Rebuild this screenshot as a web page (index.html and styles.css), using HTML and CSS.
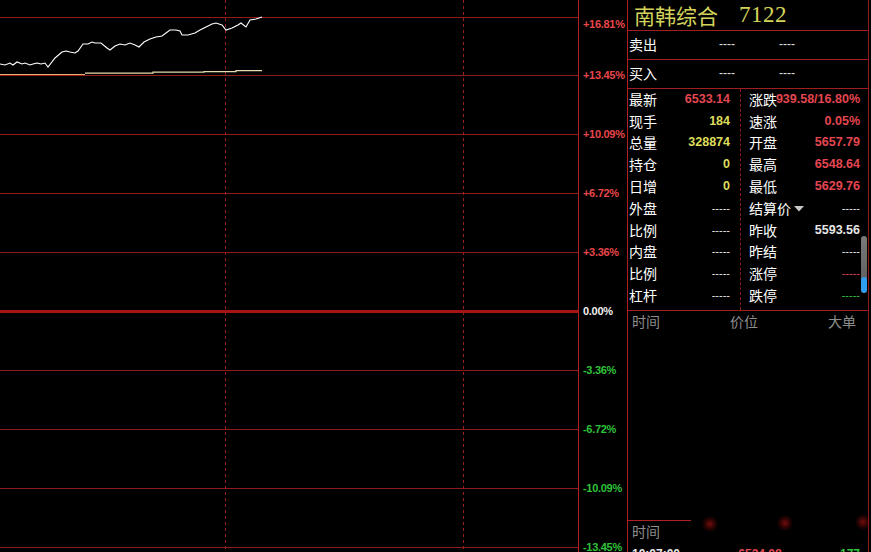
FILE: index.html
```html
<!DOCTYPE html>
<html lang="zh">
<head>
<meta charset="utf-8">
<title>南韩综合 7122</title>
<link rel="stylesheet" href="styles.css">
</head>
<body>
<div class="chart">
  <svg class="chart-svg" width="579" height="552" viewBox="0 0 579 552">
    <g stroke="#8e1a1a" stroke-width="1">
      <line x1="0" y1="17.5" x2="578" y2="17.5"/>
      <line x1="0" y1="75.5" x2="578" y2="75.5"/>
      <line x1="0" y1="134.5" x2="578" y2="134.5"/>
      <line x1="0" y1="193.5" x2="578" y2="193.5"/>
      <line x1="0" y1="252.5" x2="578" y2="252.5"/>
      <line x1="0" y1="370.5" x2="578" y2="370.5"/>
      <line x1="0" y1="429.5" x2="578" y2="429.5"/>
      <line x1="0" y1="488.5" x2="578" y2="488.5"/>
      <line x1="0" y1="547.5" x2="578" y2="547.5"/>
    </g>
    <line x1="0" y1="311.5" x2="578" y2="311.5" stroke="#a81414" stroke-width="3"/>
    <g stroke="#9a2020" stroke-width="1" stroke-dasharray="3,3">
      <line x1="225.5" y1="0" x2="225.5" y2="552"/>
      <line x1="463.5" y1="0" x2="463.5" y2="552"/>
    </g>
    <line x1="578.5" y1="0" x2="578.5" y2="552" stroke="#b02020" stroke-width="1"/>
    <polyline fill="none" stroke="#e8b070" stroke-width="1.2" points="0,74.5 85,74.5"/>
    <polyline fill="none" stroke="#e8dcb0" stroke-width="1.2" points="85,73.2 153,73.2 153,72.2 204,72.2 204,71.6 236,71.6 236,70.6 262,70.6"/>
    <polyline fill="none" stroke="#ffffff" stroke-width="1.1" points="0,64 5,65 10,63 13,65 17,62 22,64 25,63 30,65 33,64 37,63 41,64 45,63 48,67 55,58 62,52 66,51 70,52 75,53 78,51 83,44 88,44 92,42 95,43 101,43 107,48 110,50 115,46 120,44 125,45 130,43 135,45 139,47 144,42 150,39 156,37 162,36 166,33 170,30 176,30 180,31 182,35 188,35 195,33 200,30 206,27 212,24 216,23 222,25 226,30 232,28 238,25 241,23 246,27 250,20 256,19 262,17"/>
  </svg>
</div>
<div class="axis">
  <div class="tick tick-first up">+16.81%</div>
  <div class="tick up">+13.45%</div>
  <div class="tick up">+10.09%</div>
  <div class="tick up">+6.72%</div>
  <div class="tick up">+3.36%</div>
  <div class="tick zero">0.00%</div>
  <div class="tick down">-3.36%</div>
  <div class="tick down">-6.72%</div>
  <div class="tick down">-10.09%</div>
  <div class="tick down">-13.45%</div>
</div>
<div class="panel">
  <div class="title"><span class="title-name">南韩综合</span><span class="title-code">7122</span></div>
  <div class="quote-row"><span class="lbl">卖出</span><span class="dash q1">----</span><span class="dash q2">----</span></div>
  <div class="quote-row"><span class="lbl">买入</span><span class="dash q1">----</span><span class="dash q2">----</span></div>
  <div class="stats">
    <div class="col col-left">
      <div class="row"><span class="lbl">最新</span><span class="val red">6533.14</span></div>
      <div class="row"><span class="lbl">现手</span><span class="val yellow">184</span></div>
      <div class="row"><span class="lbl">总量</span><span class="val yellow">328874</span></div>
      <div class="row"><span class="lbl">持仓</span><span class="val yellow">0</span></div>
      <div class="row"><span class="lbl">日增</span><span class="val yellow">0</span></div>
      <div class="row"><span class="lbl">外盘</span><span class="val white thin">-----</span></div>
      <div class="row"><span class="lbl">比例</span><span class="val white thin">-----</span></div>
      <div class="row"><span class="lbl">内盘</span><span class="val white thin">-----</span></div>
      <div class="row"><span class="lbl">比例</span><span class="val white thin">-----</span></div>
      <div class="row"><span class="lbl">杠杆</span><span class="val white thin">-----</span></div>
    </div>
    <div class="col col-right">
      <div class="row"><span class="lbl">涨跌</span><span class="val red over">939.58/16.80%</span></div>
      <div class="row"><span class="lbl">速涨</span><span class="val red">0.05%</span></div>
      <div class="row"><span class="lbl">开盘</span><span class="val red">5657.79</span></div>
      <div class="row"><span class="lbl">最高</span><span class="val red">6548.64</span></div>
      <div class="row"><span class="lbl">最低</span><span class="val red">5629.76</span></div>
      <div class="row"><span class="lbl">结算价<svg class="caret" width="10" height="6" viewBox="0 0 10 6"><polygon points="0,0 10,0 5,5.5" fill="#c8c8c8"/></svg></span><span class="val white thin">-----</span></div>
      <div class="row"><span class="lbl">昨收</span><span class="val light">5593.56</span></div>
      <div class="row"><span class="lbl">昨结</span><span class="val white thin">-----</span></div>
      <div class="row"><span class="lbl">涨停</span><span class="val red thin">-----</span></div>
      <div class="row"><span class="lbl">跌停</span><span class="val green thin">-----</span></div>
    </div>
  </div>
  <div class="ticks">
    <div class="ticks-head"><span>时间</span><span>价位</span><span>大单</span></div>
    <div class="ticks-body"></div>
    <div class="ticks-rule"></div>
    <div class="ticks-head2"><span>时间</span></div>
    <div class="ticks-row"><span class="white">10:07:00</span><span class="red">6524.08</span><span class="green">177</span></div>
  </div>
  <div class="scrollbar"><div class="thumb"></div></div>
  <div class="glow g1"></div>
  <div class="glow g2"></div>
  <div class="glow g3"></div>
</div>
</body>
</html>
```
FILE: styles.css
```css
html, body {
  margin: 0;
  padding: 0;
  background: #000;
}
body {
  width: 871px;
  height: 552px;
  overflow: hidden;
  display: flex;
  font-family: "Noto Sans CJK SC", "Liberation Sans", sans-serif;
  color: #fff;
}
.chart {
  width: 579px;
  height: 552px;
  flex: none;
}
.chart-svg {
  display: block;
}
.axis {
  width: 48px;
  flex: none;
  display: flex;
  flex-direction: column;
  font-family: "Liberation Sans", Arial, sans-serif;
  font-weight: bold;
  font-size: 11px;
  padding-left: 4px;
  box-sizing: border-box;
}
.tick {
  height: 59px;
  line-height: 59px;
  flex: none;
  white-space: nowrap;
  letter-spacing: -0.3px;
}
.tick-first {
  height: 46px;
  line-height: 14px;
  padding-top: 17px;
  box-sizing: border-box;
}
.up { color: #e8464a; }
.zero { color: #f0f0f0; }
.down { color: #2fc23a; }

.panel {
  position: relative;
  width: 242px;
  flex: none;
  height: 552px;
  border-left: 1px solid #b02020;
  border-right: 1px solid #8c1a1a;
  box-sizing: border-box;
  display: flex;
  flex-direction: column;
}
.title {
  height: 31px;
  border-bottom: 1px solid #a01e1e;
  box-sizing: border-box;
  display: flex;
  align-items: center;
  padding-left: 6px;
  padding-bottom: 1px;
  color: #d4d45a;
  white-space: nowrap;
}
.title-name {
  font-size: 21px;
  line-height: 28px;
}
.title-code {
  font-family: "Liberation Serif", serif;
  font-size: 23px;
  line-height: 28px;
  margin-left: 21px;
  letter-spacing: 0.5px;
}
.quote-row {
  height: 29px;
  border-bottom: 1px solid #a01e1e;
  box-sizing: border-box;
  display: flex;
  align-items: center;
  font-size: 14px;
  padding-left: 1px;
  padding-bottom: 3px;
}
.lbl {
  font-size: 14px;
  color: #fff;
  white-space: nowrap;
  display: flex;
  align-items: center;
}
.dash {
  font-family: "Liberation Sans", sans-serif;
  font-size: 12px;
  color: #e0e0e0;
}
.q1 { margin-left: 62px; }
.q2 { margin-left: 44px; }

.stats {
  height: 222px;
  border-bottom: 1px solid #a01e1e;
  box-sizing: border-box;
  display: flex;
}
.col {
  display: flex;
  flex-direction: column;
  margin-top: -1px;
}
.col-left {
  width: 113px;
  border-right: 1px dashed #8c1c1c;
  padding: 0 10px 0 1px;
  box-sizing: border-box;
  margin-top: 0;
}
.col-left .row:first-child { margin-top: -1px; }
.col-right {
  flex: 1;
  padding: 0 8px 0 8px;
}
.row {
  height: 21.8px;
  flex: none;
  display: flex;
  align-items: center;
  justify-content: space-between;
  position: relative;
}
.val {
  font-family: "Liberation Sans", Arial, sans-serif;
  font-weight: bold;
  font-size: 12.5px;
  white-space: nowrap;
}
.over {
  position: absolute;
  right: 0;
}
.thin { font-weight: normal; font-size: 11px; }
.red { color: #e44650; }
.yellow { color: #dede5a; }
.white { color: #e8e8e8; }
.light { color: #e6e6e6; }
.green { color: #36c23e; }
.caret {
  margin-left: 3px;
  margin-top: 2px;
}

.ticks {
  flex: 1;
  display: flex;
  flex-direction: column;
  overflow: hidden;
}
.ticks-head {
  height: 21px;
  display: flex;
  align-items: center;
  color: #8e8e8e;
  font-size: 14px;
  padding: 0 12px 1px 4px;
  box-sizing: border-box;
  justify-content: space-between;
}
.ticks-body {
  height: 188px;
  flex: none;
}
.ticks-rule {
  width: 63px;
  height: 1px;
  background: #b02020;
  flex: none;
}
.ticks-head2 {
  height: 24px;
  display: flex;
  align-items: center;
  color: #8e8e8e;
  font-size: 14px;
  padding-left: 4px;
}
.ticks-row {
  height: 18px;
  display: flex;
  align-items: center;
  justify-content: space-between;
  font-family: "Liberation Sans", Arial, sans-serif;
  font-weight: bold;
  font-size: 12px;
  padding: 6px 8px 0 4px;
}
.scrollbar {
  position: absolute;
  left: 233px;
  top: 236px;
  width: 6px;
  height: 57px;
  border-radius: 3px;
  background: linear-gradient(#7a7a7a, #5a5a5a);
  overflow: hidden;
}
.thumb {
  position: absolute;
  left: 0;
  bottom: 0;
  width: 6px;
  height: 16px;
  border-radius: 3px;
  background: #2f9ef0;
}
.glow {
  position: absolute;
  width: 16px;
  height: 16px;
  border-radius: 50%;
  background: radial-gradient(circle, rgba(190,20,20,0.6) 0%, rgba(150,10,10,0.25) 45%, rgba(0,0,0,0) 75%);
}
.g1 { left: 74px; top: 516px; }
.g2 { left: 149px; top: 515px; }
.g3 { left: 227px; top: 514px; }
```
